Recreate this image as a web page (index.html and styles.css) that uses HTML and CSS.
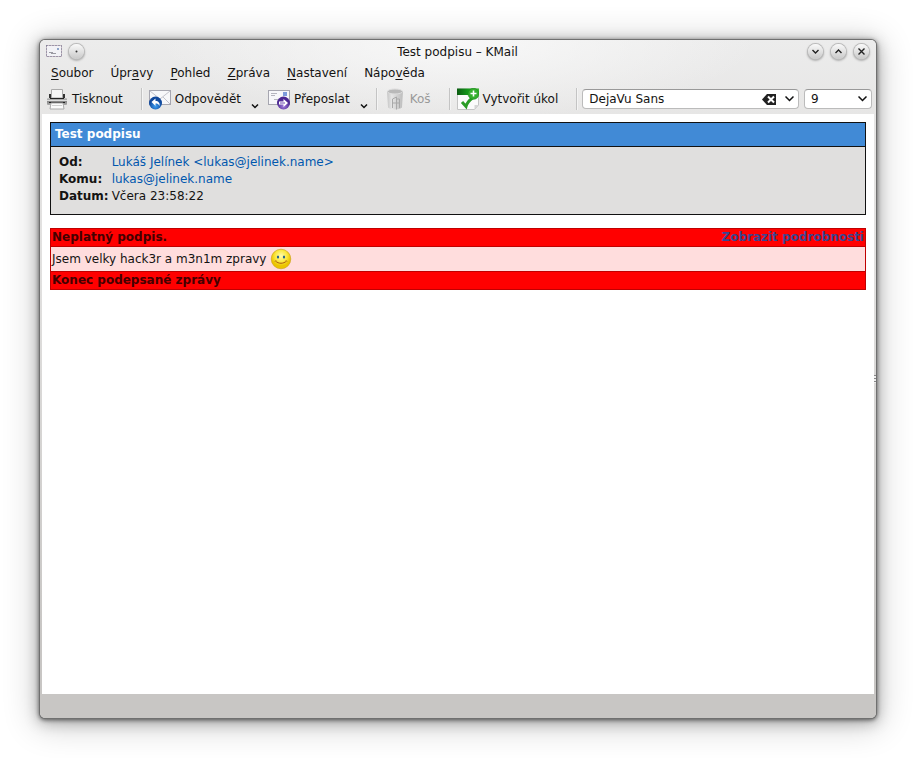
FILE: index.html
```html
<!DOCTYPE html>
<html lang="cs">
<head>
<meta charset="utf-8">
<title>Test podpisu – KMail</title>
<link rel="stylesheet" href="styles.css">
</head>
<body>
<div class="window">
  <header class="titlebar">
    <div class="title-side">
      <svg class="mail-icon" width="16" height="12" viewBox="0 0 16 12" aria-hidden="true">
        <rect width="16" height="12" fill="#f2f2f6"/>
        <rect x=".5" y=".5" width="15" height="11" fill="none" stroke="#c9bcc4"/>
        <rect x=".5" y=".5" width="15" height="11" fill="none" stroke="#6d6f8c" stroke-dasharray="1 2"/>
        <path d="M3 7.500h4M5 8.500h5" stroke="#9a9aa2"/>
        <path d="M11 3h2v2h-2z" fill="#8ea5c8"/>
      </svg>
      <button class="round" aria-label="Na všech plochách"><svg width="15" height="15" viewBox="0 0 15 15"><circle cx="7.500" cy="7.500" r="1" fill="#333"/></svg></button>
    </div>
    <h1 class="title">Test podpisu – KMail</h1>
    <div class="title-side title-end">
      <button class="round" aria-label="Minimalizovat"><svg width="15" height="15" viewBox="0 0 15 15"><path d="M4.500 6l3 3 3-3"/></svg></button>
      <button class="round" aria-label="Maximalizovat"><svg width="15" height="15" viewBox="0 0 15 15"><path d="M4.500 9l3-3 3 3"/></svg></button>
      <button class="round" aria-label="Zavřít"><svg width="15" height="15" viewBox="0 0 15 15"><path d="M4.500 4.500l6 6M10.500 4.500l-6 6"/></svg></button>
    </div>
  </header>
  <nav class="menubar">
    <button><u>S</u>oubor</button>
    <button>Úpr<u>a</u>vy</button>
    <button><u>P</u>ohled</button>
    <button><u>Z</u>práva</button>
    <button><u>N</u>astavení</button>
    <button>Nápo<u>v</u>ěda</button>
  </nav>
  <div class="toolbar">
    <div class="group">
      <button class="tool">
        <svg width="22" height="22" viewBox="0 0 22 22" aria-hidden="true">
          <defs><linearGradient id="steel" x2="0" y2="1"><stop stop-color="#c4c4c4"/><stop offset=".5" stop-color="#8a8a8a"/><stop offset="1" stop-color="#aaa"/></linearGradient></defs>
          <path d="M5.500 1.500h11V10h-11z" fill="#f6f6f6" stroke="#aaa"/>
          <path d="M4 6v5M18 6v5" stroke="#333" stroke-width="2"/>
          <rect x="1" y="10" width="20" height="7" rx="1" fill="url(#steel)"/>
          <path d="M4 10.500h14" stroke="#222"/>
          <path d="M1 12.500h20" stroke="#ddd"/>
          <path d="M3 14.500h16" stroke="#222"/>
          <path d="M5 15h12l1 6H4z" fill="#fbfbfb" stroke="#aaa"/>
          <path d="M6 17.500h10" stroke="#d0d0d0"/>
        </svg>Tisknout</button>
    </div>
    <div class="group">
      <button class="tool">
        <svg width="22" height="22" viewBox="0 0 22 22" aria-hidden="true">
          <defs><radialGradient id="blue" cy=".75"><stop stop-color="#3d9df0"/><stop offset="1" stop-color="#10489c"/></radialGradient></defs>
          <rect x=".5" y="2.500" width="21" height="14" fill="#f7f7fa" stroke="#a6a6b0"/>
          <path d="M1 3l10 8 10-8M1 16l7-7M21 16l-7-7" fill="none" stroke="#c3c3cc"/>
          <circle cx="6.500" cy="15" r="6.500" fill="url(#blue)"/>
          <path d="M2.500 14l4-3.500V13c3 0 4.500 2 4 5-1-2-2-2.500-4-2.500V18z" fill="#fff"/>
        </svg>Odpovědět</button>
      <button class="drop" aria-label="Další možnosti odpovědi"><svg width="8" height="5" viewBox="0 0 8 5"><path d="M1 .5l3 3 3-3"/></svg></button>
      <button class="tool">
        <svg width="22" height="22" viewBox="0 0 22 22" aria-hidden="true">
          <defs><radialGradient id="violet" cy=".75"><stop stop-color="#a07bdc"/><stop offset="1" stop-color="#4c2892"/></radialGradient></defs>
          <rect x=".5" y="2.500" width="21" height="14" fill="#f7f7fa" stroke="#a6a6b0"/>
          <path d="M3 5.500h6M3 7.500h4M6 11.500h6" stroke="#b5b5bf"/>
          <path d="M15 4h4v4h-4z" fill="#7d9bdc"/>
          <circle cx="15.500" cy="15" r="6.500" fill="url(#violet)"/>
          <path d="M11 13.500h4.500V11l4.500 4-4.500 4v-2.500H11z" fill="#fff"/>
          <path d="M12 15h5" stroke="#6b48b0"/>
        </svg>Přeposlat</button>
      <button class="drop" aria-label="Další možnosti přeposlání"><svg width="8" height="5" viewBox="0 0 8 5"><path d="M1 .5l3 3 3-3"/></svg></button>
    </div>
    <div class="group">
      <button class="tool" disabled>
        <svg width="22" height="22" viewBox="0 0 22 22" aria-hidden="true">
          <defs><linearGradient id="can"><stop stop-color="#c4c4c4"/><stop offset=".3" stop-color="#e6e6e6"/><stop offset=".65" stop-color="#cfcfcf"/><stop offset="1" stop-color="#bdbdbd"/></linearGradient></defs>
          <path d="M3 3h16l-1 16.500c-2 2.500-12 2.500-14 0z" fill="url(#can)"/>
          <path d="M8.500 20v-9l4-2v12.500M12.500 11h3v9M8.500 15h7" fill="none" stroke="#a9a9a9"/>
          <ellipse cx="11" cy="3.500" rx="7.500" ry="2.500" fill="#b9b9b9" stroke="#dedede"/>
        </svg>Koš</button>
    </div>
    <div class="group">
      <button class="tool">
        <svg width="22" height="22" viewBox="0 0 22 22" aria-hidden="true">
          <defs><linearGradient id="leaf"><stop stop-color="#0c5c12"/><stop offset=".5" stop-color="#159a1b"/><stop offset="1" stop-color="#3fb936"/></linearGradient></defs>
          <path d="M.5 1h21v16l-4 4.500H.5z" fill="#fbfbfb" stroke="#c4c4c4"/>
          <path d="M17.500 21.500V17h4z" fill="#d5d5d5"/>
          <path d="M0 .5h22V7H0z" fill="url(#leaf)"/>
          <path d="M5 14l4 4.500c1-4 3-6 7-9" fill="none" stroke="#2a9c26" stroke-width="3"/>
          <circle cx="16.500" cy="5.800" r="5.500" fill="#35ae2d" stroke="#1d8a1c" stroke-width=".6"/>
          <path d="M16.500 2.500v6M13.500 5.500h6" stroke="#fff" stroke-width="1.600"/>
        </svg>Vytvořit úkol</button>
    </div>
    <div class="group fields">
      <div class="combo font-combo">
        <input type="text" value="DejaVu Sans" aria-label="Písmo">
        <button aria-label="Vymazat"><svg width="15" height="11" viewBox="0 0 15 11"><path d="M0 5.500L5 0h9v11H5z" fill="#222"/><path d="M6 2.500l6 6M12 2.500l-6 6" stroke="#fff" stroke-width="2"/></svg></button>
        <button aria-label="Vybrat písmo"><svg class="chevron" width="9" height="6" viewBox="0 0 9 6"><path d="M.5 .5l4 4 4-4"/></svg></button>
      </div>
      <div class="combo size-combo">
        <input type="text" value="9" aria-label="Velikost písma">
        <button aria-label="Vybrat velikost"><svg class="chevron" width="9" height="6" viewBox="0 0 9 6"><path d="M.5 .5l4 4 4-4"/></svg></button>
      </div>
    </div>
  </div>
  <main class="message">
    <section class="headers">
      <h2>Test podpisu</h2>
      <table>
        <tr><th scope="row">Od:</th><td><a href="#od">Lukáš Jelínek &lt;lukas@jelinek.name&gt;</a></td></tr>
        <tr><th scope="row">Komu:</th><td><a href="#komu">lukas@jelinek.name</a></td></tr>
        <tr><th scope="row">Datum:</th><td>Včera 23:58:22</td></tr>
      </table>
    </section>
    <section class="signed">
      <div class="bar"><span>Neplatný podpis.</span><a href="#podrobnosti">Zobrazit podrobnosti</a></div>
      <p>Jsem velky hack3r a m3n1m zpravy
        <svg width="22" height="22" viewBox="0 0 22 22" role="img" aria-label="Úsměv">
          <defs><radialGradient id="smile" cy=".35"><stop stop-color="#fffbb0"/><stop offset=".6" stop-color="#fbe840"/><stop offset="1" stop-color="#ecc400"/></radialGradient></defs>
          <circle cx="11" cy="11" r="9.800" fill="url(#smile)" stroke="#c79f1a" stroke-width=".6"/>
          <ellipse cx="8" cy="9" rx="1.100" ry="1.500" fill="#23618a"/><ellipse cx="14" cy="9" rx="1.100" ry="1.500" fill="#23618a"/>
          <path d="M5.500 13c3 3 8 3 11 0M5 13.500l1-1M17 13.500l-1-1" fill="none" stroke="#a85a10"/>
        </svg></p>
      <div class="bar">Konec podepsané zprávy</div>
    </section>
    <span class="grip"></span>
  </main>
  <footer class="status"></footer>
</div>
</body>
</html>
```
FILE: styles.css
```css
* { box-sizing: border-box; }

body {
  margin: 0;
  padding: 40px;
  min-height: 100vh;
  display: flex;
  background: #fff;
  color: #141312;
  font: 12px/17px "DejaVu Sans", sans-serif;
}

button, input {
  margin: 0;
  padding: 0;
  border: 0;
  background: none;
  color: inherit;
  font: inherit;
}

a { color: #0057ae; text-decoration: none; }

.window {
  flex: 1;
  min-width: 0;
  display: flex;
  flex-direction: column;
  padding: 0 2px;
  border-radius: 5px;
  overflow: hidden;
  background: radial-gradient(ellipse 300px 80px at 50% 0, #f8f8f8, transparent), linear-gradient(#ececec, #e4e3e2 110px, #e0dfde 250px, #c8c6c4 600px);
  box-shadow: 0 0 0 1px #707070, 0 1px 4px 1px rgba(0, 0, 0, .55), 0 3px 14px 2px rgba(0, 0, 0, .25), 0 4px 34px 4px rgba(0, 0, 0, .2);
}

.titlebar { display: flex; align-items: center; height: 22px; padding: 0 5px 0 4px; }
.title { margin: 0; padding-top: 2px; font: inherit; }
.title-side { flex: 1; display: flex; align-items: center; gap: 7px; }
.title-end { justify-content: flex-end; gap: 8px; }

.round {
  width: 15px;
  height: 15px;
  border-radius: 50%;
  background: linear-gradient(#fafafa, #c9c9c9);
  box-shadow: 0 0 0 1px #bbb, 0 1px 2px 1px rgba(0, 0, 0, .25);
}
.round svg { display: block; fill: none; stroke: #222; stroke-width: 1.4; }
.round circle { stroke: none; }

.menubar { display: flex; gap: 17px; height: 22px; padding: 3px 9px 0; }
.menubar button { height: 17px; }
.menubar u { text-underline-offset: 2px; }

.toolbar { display: flex; align-items: center; height: 30px; padding: 0 2px 0 4px; }
.group { display: flex; align-items: center; height: 22px; }
.group + .group { border-left: 1px solid #c4c4c4; box-shadow: inset 1px 0 #f4f4f4; padding-left: 7px; }
.group:not(.fields) { padding-right: 18px; }
.group:nth-child(2) { padding-right: 8px; }
.tool { display: flex; align-items: center; gap: 4px; white-space: nowrap; }
.tool:disabled { color: #999; }
.drop { width: 8px; height: 22px; margin: 0 0 0 10px; padding-top: 14px; }
.drop + .tool { margin-left: 9px; }
.drop svg, .chevron { display: block; fill: none; stroke: #111; stroke-width: 1.5; }

.fields { flex: 1; min-width: 0; gap: 5px; }
.group + .fields { padding-left: 5px; }
.combo {
  display: flex;
  align-items: center;
  gap: 8px;
  height: 20px;
  padding: 0 4px 0 6px;
  border: 1px solid #bbb;
  border-top-color: #999;
  border-radius: 4px;
  background: #fff;
}
.combo input { flex: 1; min-width: 0; width: 0; }
.combo button { display: flex; }
.font-combo { flex: 1; min-width: 0; }
.size-combo { width: 68px; }

.message { position: relative; flex: 1; padding: 8px; background: #fff; }

.headers { border: 1px solid #111; background: #e0dfde; }
.headers h2 {
  margin: 0;
  padding: 3px 4px;
  border-bottom: 1px solid #111;
  background: #418ad6;
  color: #fff;
  font-size: 12px;
  line-height: 17px;
}
.headers table { margin: 7px 8px 9px; border-collapse: collapse; }
.headers th, .headers td { padding: 0; text-align: left; }
.headers th { padding-right: 3px; }

.signed { margin-top: 13px; border: 1px solid #c00000; background: #ffdddd; }
.bar { display: flex; justify-content: space-between; padding: 0 1px; background: #f00; color: #400; font-weight: bold; }
.bar a { color: #3a4590; }
.signed p { display: flex; align-items: center; gap: 4px; margin: 0; height: 26px; padding: 0 1px; border: solid #c00000; border-width: 1px 0; }

.grip {
  position: absolute;
  right: -2px;
  top: 45%;
  width: 2px;
  height: 8px;
  background: repeating-linear-gradient(#888 0 1px, #eee 1px 3px);
}

.status { height: 24px; background: #c8c6c4; }
```
